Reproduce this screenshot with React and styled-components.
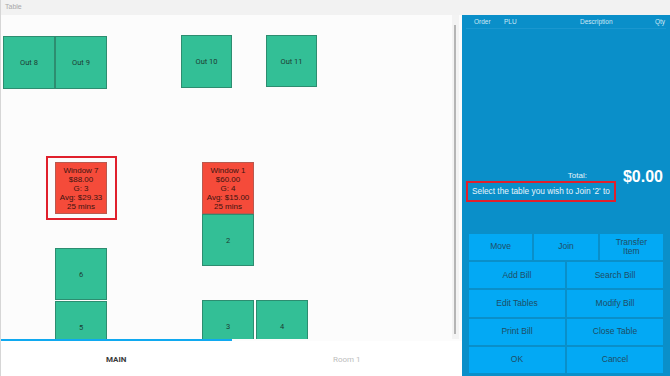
import React from 'react';
import styled, { createGlobalStyle } from 'styled-components';

const GlobalStyle = createGlobalStyle`
  html, body {
    margin: 0;
    padding: 0;
    width: 670px;
    height: 376px;
    overflow: hidden;
    font-family: "Liberation Sans", Arial, sans-serif;
    background: #fcfcfc;
  }
`;

const tables = [
  { name: 'Out 8', x: 2, y: 21, w: 52, h: 53 },
  { name: 'Out 9', x: 54, y: 21, w: 52, h: 53 },
  { name: 'Out 10', x: 180, y: 20, w: 51, h: 53 },
  { name: 'Out 11', x: 265, y: 20, w: 51, h: 52 },
  { name: '2', x: 201, y: 199, w: 52, h: 52 },
  { name: '6', x: 54, y: 233, w: 52, h: 52 },
  { name: '5', x: 54, y: 286, w: 52, h: 52 },
  { name: '3', x: 201, y: 285, w: 52, h: 52 },
  { name: '4', x: 255, y: 285, w: 52, h: 52 },
];

const busy = [
  { lines: ['Window 7', '$88.00', 'G: 3', 'Avg: $29.33', '25 mins'], x: 54, y: 147, selected: true },
  { lines: ['Window 1', '$60.00', 'G: 4', 'Avg: $15.00', '25 mins'], x: 201, y: 147 },
];

const App = () => {
  return (
    <>
      <GlobalStyle />
      <Window>
        <TitleBar>Table</TitleBar>
        <Body>
          <FloorSide>
            <Canvas>
              {tables.map((t) => (
                <FreeTable key={t.name} style={{ left: t.x, top: t.y, width: t.w, height: t.h }}>
                  {t.name}
                </FreeTable>
              ))}
              {busy.map((t) => (
                <React.Fragment key={t.lines[0]}>
                  {t.selected && <Highlight style={{ left: t.x - 9, top: t.y - 6 }} />}
                  <BusyTable style={{ left: t.x, top: t.y }}>
                    {t.lines.map((l) => (
                      <div key={l}>{l}</div>
                    ))}
                  </BusyTable>
                </React.Fragment>
              ))}
              <ScrollTrack>
                <ScrollThumb />
              </ScrollTrack>
            </Canvas>
            <Indicator />
            <Tabs>
              <Tab active>MAIN</Tab>
              <Tab>Room 1</Tab>
            </Tabs>
          </FloorSide>

          <OrderPanel>
            <HeaderRow>
              <span>Order</span>
              <span>PLU</span>
              <span>Description</span>
              <span>Qty</span>
            </HeaderRow>
            <Spacer />
            <TotalRow>
              <TotalLabel>Total:</TotalLabel>
              <TotalValue>$0.00</TotalValue>
            </TotalRow>
            <Message>Select the table you wish to Join '2' to</Message>
            <ButtonGrid>
              <ActionButton span={2}>Move</ActionButton>
              <ActionButton span={2}>Join</ActionButton>
              <ActionButton span={2}>Transfer<br />Item</ActionButton>
              <ActionButton span={3}>Add Bill</ActionButton>
              <ActionButton span={3}>Search Bill</ActionButton>
              <ActionButton span={3}>Edit Tables</ActionButton>
              <ActionButton span={3}>Modify Bill</ActionButton>
              <ActionButton span={3}>Print Bill</ActionButton>
              <ActionButton span={3}>Close Table</ActionButton>
              <ActionButton span={3}>OK</ActionButton>
              <ActionButton span={3}>Cancel</ActionButton>
            </ButtonGrid>
          </OrderPanel>
        </Body>
      </Window>
    </>
  );
};

export default App;

const Window = styled.div`
  width: 670px;
  height: 376px;
  display: flex;
  flex-direction: column;
  border-left: 1px solid #d6d6d6;
  box-sizing: border-box;
`;

const TitleBar = styled.div`
  height: 15px;
  flex: none;
  background: #f2f2f2;
  color: #a8a8a8;
  font-size: 7px;
  line-height: 14px;
  padding-left: 4px;
`;

const Body = styled.div`
  flex: 1;
  display: flex;
  min-height: 0;
`;

const FloorSide = styled.div`
  flex: none;
  width: 461px;
  display: flex;
  flex-direction: column;
`;

const Canvas = styled.div`
  position: relative;
  height: 324px;
  overflow: hidden;
  background: #fcfcfc;
`;

const FreeTable = styled.div`
  position: absolute;
  box-sizing: border-box;
  background: #33bf96;
  border: 1px solid #2d8d70;
  display: flex;
  align-items: center;
  justify-content: center;
  color: #1d3b33;
  font-family: Roboto, "Liberation Sans", sans-serif;
  font-size: 7.5px;
`;

const BusyTable = styled.div`
  position: absolute;
  box-sizing: border-box;
  width: 52px;
  height: 52px;
  background: #f54b3a;
  border: 1px solid #b9594f;
  display: flex;
  flex-direction: column;
  align-items: center;
  justify-content: center;
  color: #3b1410;
  font-size: 8px;
  line-height: 9px;
  text-align: center;
  white-space: nowrap;
`;

const Highlight = styled.div`
  position: absolute;
  width: 71px;
  height: 64px;
  box-sizing: border-box;
  border: 2px solid #e0202c;
`;

const ScrollTrack = styled.div`
  position: absolute;
  right: 3px;
  top: 0;
  bottom: 0;
  width: 7px;
  background: #f3f3f3;
`;

const ScrollThumb = styled.div`
  position: absolute;
  left: 2px;
  top: 10px;
  bottom: 5px;
  width: 2px;
  background: #b5b5b5;
`;

const Indicator = styled.div`
  height: 2px;
  width: 231px;
  background: #10a9f0;
`;

const Tabs = styled.div`
  flex: 1;
  display: flex;
  background: #ffffff;
`;

const Tab = styled.div`
  flex: 1;
  display: flex;
  align-items: center;
  justify-content: center;
  font-family: Roboto, "Liberation Sans", sans-serif;
  font-size: 8px;
  font-weight: ${(p) => (p.active ? 700 : 400)};
  color: ${(p) => (p.active ? '#3a3a3a' : '#bdbdbd')};
  padding-top: 1px;
`;

const OrderPanel = styled.div`
  flex: 1;
  min-width: 0;
  background: #0a8fc9;
  display: flex;
  flex-direction: column;
  padding: 0 4px 3px 4px;
`;

const HeaderRow = styled.div`
  height: 13px;
  display: grid;
  grid-template-columns: 30px 76px 1fr 20px;
  align-items: center;
  border-bottom: 1px solid #1a97cf;
  color: #cfe8f5;
  font-size: 6.5px;
  padding-left: 8px;
  & span:nth-child(4) { text-align: right; padding-right: 1px; }
`;

const Spacer = styled.div`
  height: 139px;
`;

const TotalRow = styled.div`
  display: flex;
  align-items: center;
  justify-content: flex-end;
  height: 22px;
  padding-right: 3px;
`;

const TotalLabel = styled.span`
  color: #e4f3fb;
  font-size: 8px;
  margin-right: 36px;
  margin-top: -3px;
`;

const TotalValue = styled.span`
  color: #ffffff;
  font-size: 16px;
  font-weight: 700;
`;

const Message = styled.div`
  width: 150px;
  height: 21px;
  box-sizing: border-box;
  border: 2px solid #e0202c;
  color: #e8f4fb;
  font-size: 8.3px;
  line-height: 17px;
  padding-left: 4px;
  white-space: nowrap;
  margin-top: -7px;
`;

const ButtonGrid = styled.div`
  margin-top: 32px;
  margin-left: 3px;
  margin-right: 3px;
  height: 141px;
  display: grid;
  grid-template-columns: repeat(6, 1fr);
  grid-template-rows: repeat(5, 1fr);
  gap: 2px;
`;

const ActionButton = styled.div`
  grid-column: span ${(p) => p.span};
  background: #03a9f4;
  display: flex;
  align-items: center;
  justify-content: center;
  text-align: center;
  color: #1f4d66;
  font-size: 8.5px;
  line-height: 9px;
`;
